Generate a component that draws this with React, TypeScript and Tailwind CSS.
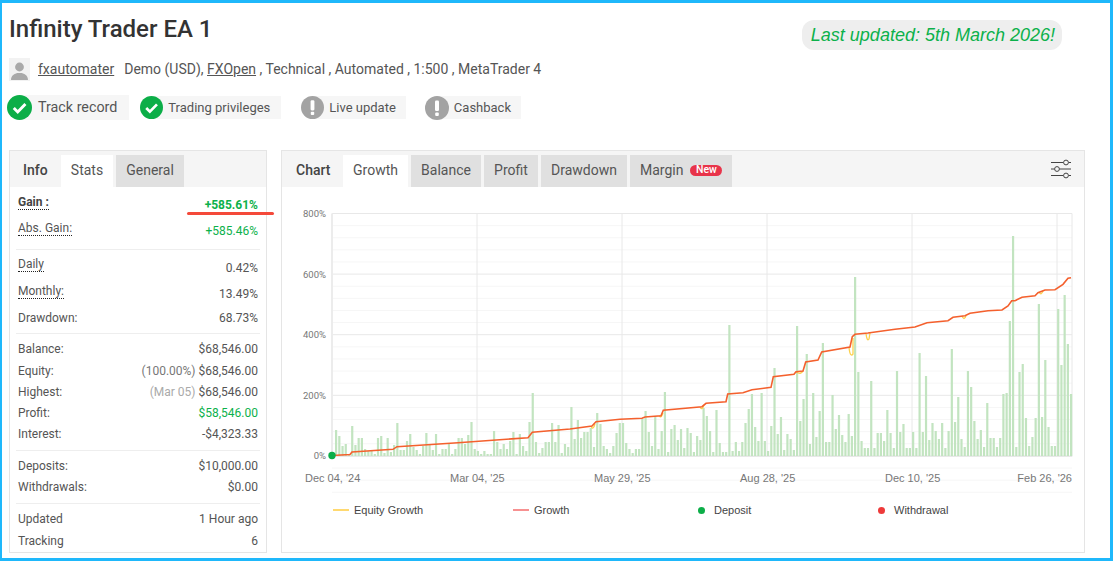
const bars = [
  26, 20, 10, 12, 2, 30, 11, 18, 18, 7, 5, 5, 2, 18, 20, 3, 18, 4, 11, 33, 6, 6, 15, 22, 9, 6, 2, 10, 23, 11, 6, 22, 2, 7, 7, 12, 2, 7, 18, 18, 12, 21, 34, 7, 5, 2, 5, 2, 2, 25, 14, 7, 12, 7, 15, 24, 2, 22, 10, 5, 34, 63, 14, 3, 8, 14, 14, 33, 14, 31, 3, 12, 9,
  49, 17, 36, 18, 24, 24, 28, 9, 43, 32, 10, 7, 3, 10, 23, 33, 33, 13, 7, 3, 7, 7, 37, 45, 24, 10, 39, 7, 25, 64, 4, 27, 31, 16, 27, 8, 28, 23, 4, 20, 16, 48, 40, 25, 4, 46, 13, 4, 4, 131, 5, 14, 5, 14, 33, 47, 62, 29, 15, 63, 15, 5, 30, 88, 22, 39, 6, 22, 17, 6, 130, 35, 57, 102, 12, 63, 19, 45,
  113, 14, 14, 61, 27, 41, 21, 14, 42, 20, 179, 84, 15, 8, 8, 75, 8, 23, 23, 15, 46, 23, 8, 85, 24, 32, 8, 8, 24, 8, 103, 24, 80, 16, 33, 25, 17, 33, 8, 25, 107, 34, 59, 17, 9, 85, 69, 35, 17, 26, 9, 53, 18, 18, 9, 18, 62, 63, 135, 220, 9, 84, 92, 38, 10, 19, 38, 152, 39, 96, 29, 10, 10, 147, 91, 161, 112, 62,
];

const growth =
  "M332 455.5 L350 454.5 L352 452 L393 449.3 L397 446.7 L458 442.7 L528 437.7 L532.3 432.3 L570 429 L592 426 L596 421.7 L620 419.3 L642 418.3 L645 417 L661 415.7 L663.3 410.3 L702 406.7 L706 403.3 L726 401.7 L727.7 394 L743 392.7 L752 389.7 L771 387.3 L773.3 376.7 L794 374.3 L796 371.7 L803 371 L805.7 362 L818 360 L821.7 352 L850 347 L852.3 336.7 L855 334.3 L868 333 L895 329.3 L915 327 L927 322.7 L948 320.7 L953 317.3 L965 315.7 L970 313.3 L988 310.7 L1002 310 L1008 306 L1011.7 300.7 L1015 300.7 L1022 297.3 L1035 295.7 L1038 292.7 L1045 290 L1055 289.7 L1063 284.3 L1068 278.3 L1071 277.7";

const dips = [
  "M591 426 Q593 431 595 424",
  "M659 415.7 Q661 419 663 413",
  "M700 407 Q702 411 704 405",
  "M796 372 Q801 375 803 371",
  "M849 347 Q850 358 853 354 L853 338",
  "M866 333.5 Q867 342 869 339 L870 333",
  "M962 316 Q964 321 966 316",
  "M1039 292 Q1041 296 1043 291",
];

const gridY = [0, 1, 2, 3, 4].flatMap((s) => [0, 1, 2, 3, 4].map((m) => 213.5 + s * 60.6 + m * 12.12));
const gridX = [477, 622, 767, 912, 1057, 1072];

const CheckIcon = ({ size }: { size: number }) => (
  <svg width={size} height={size} viewBox="0 0 24 24" className="relative shrink-0">
    <circle cx="12" cy="12" r="12" fill="#0cae48" />
    <path d="M6.5 12.5l3.8 3.8 7.4-7.6" fill="none" stroke="#fff" strokeWidth="2.8" />
  </svg>
);

const WarnIcon = ({ size }: { size: number }) => (
  <svg width={size} height={size} viewBox="0 0 24 24" className="relative shrink-0">
    <circle cx="12" cy="12" r="12" fill="#a3a3a3" />
    <rect x="10" y="4.5" width="4" height="10.5" rx="1.2" fill="#fff" />
    <rect x="10.2" y="16.5" width="3.6" height="3.4" rx="1" fill="#fff" />
  </svg>
);

const Badge = ({ ok, label, size, className }: { ok?: boolean; label: string; size: number; className: string }) => (
  <div className="flex items-center">
    {ok ? <CheckIcon size={size} /> : <WarnIcon size={size} />}
    <span className={`-ml-[12px] h-[23px] flex items-center bg-[#f6f6f6] text-[#555] ${className}`}>{label}</span>
  </div>
);

const Row = ({
  label,
  value,
  note,
  noteColor,
  dotted,
  bold,
  green,
  lift,
  h,
}: {
  label: string;
  value: string;
  note?: string;
  noteColor?: string;
  dotted?: boolean;
  bold?: boolean;
  green?: boolean;
  lift?: boolean;
  h: string;
}) => (
  <div className={`flex items-center justify-between ${h}`}>
    <span
      className={`leading-[14px] ${dotted ? "border-b border-dotted border-[#222]" : ""} ${lift ? "-mt-[6px]" : ""} ${
        bold ? "font-bold text-[#444]" : "text-[#555]"
      }`}
    >
      {label}
    </span>
    <span className={`${green ? "text-[#0cb14b]" : "text-[#555]"} ${bold ? "font-bold" : ""}`}>
      {note && <span className={`mr-[3px] ${noteColor}`}>{note}</span>}
      {value}
    </span>
  </div>
);

const Divider = () => <div className="h-px bg-[#eeeeee] -mx-[2px]" />;

const Tab = ({ label, active, className }: { label: string; active?: boolean; className: string }) => (
  <div className={`h-[32px] pb-[2px] flex items-center justify-center text-[14px] text-[#555] ${active ? "bg-white" : "bg-[#e0e0e0]"} ${className}`}>
    {label}
  </div>
);

const LegendItem = ({ color, dot, label }: { color: string; dot?: boolean; label: string }) => (
  <div className="flex items-center">
    {dot ? (
      <span className={`ml-[5px] mr-[9px] w-[7px] h-[7px] rounded-full ${color}`} />
    ) : (
      <span className={`mr-[5px] w-[16px] h-[2px] ${color}`} />
    )}
    <span>{label}</span>
  </div>
);

export default function App() {
  return (
    <div className="w-[1113px] h-[561px] overflow-hidden bg-white border-[#1fb8fb] border-t-[3px] border-b-[3px] border-l-[2px] border-r-[3px] pl-[7px] font-['Roboto',sans-serif]">
      <div className="flex justify-between h-[52px]">
        <h1 className="text-[24px] leading-[52px] font-medium text-[#333]">Infinity Trader EA 1</h1>
        <div className="self-start mt-[17px] mr-[48px] h-[30px] pl-[9px] pr-[7px] flex items-center rounded-xl bg-[#eeeeee] font-['Liberation_Sans',sans-serif] italic text-[18px] text-[#0cb14b]">
          Last updated: 5th March 2026!
        </div>
      </div>

      <div className="mt-[3px] h-[23px] flex items-center text-[14px] text-[#555]">
        <svg width="21" height="23" viewBox="0 0 21 23" className="mr-[8px]">
          <rect width="21" height="23" fill="#f2f2f2" />
          <circle cx="10.5" cy="9" r="4.4" fill="#a9a9a9" />
          <path d="M2 22c0-5 4-6 6-7h5c2 1 6 2 6 7z" fill="#a9a9a9" />
        </svg>
        <span className="underline">fxautomater</span>
        <span className="ml-[10px]">Demo (USD),&nbsp;</span>
        <span className="underline">FXOpen</span>
        <span>&nbsp;, Technical , Automated , 1:500 , MetaTrader 4</span>
      </div>

      <div className="mt-[14px] -ml-[2px] h-[25px] flex items-center">
        <Badge ok label="Track record" size={25} className="!h-[25px] pl-[18px] pr-[12px] text-[14.3px]" />
        <div className="ml-[11px]">
          <Badge ok label="Trading privileges" size={23} className="pl-[17px] pr-[11px] text-[13px]" />
        </div>
        <div className="ml-[20px]">
          <Badge label="Live update" size={23} className="pl-[17px] pr-[10px] text-[13px]" />
        </div>
        <div className="ml-[19px]">
          <Badge label="Cashback" size={24} className="pl-[17px] pr-[10px] text-[13px]" />
        </div>
      </div>

      <div className="mt-[30px] flex gap-[14px] h-[403px]">
        <div className="w-[258px] border border-[#e5e5e5] text-[12px] relative">
          <div className="h-[36px] pt-[4px] bg-[#f5f5f5] flex items-end pl-[13px]">
            <span className="h-[32px] pb-[2px] w-[38px] flex items-center text-[14px] font-medium text-[#444]">Info</span>
            <Tab label="Stats" active className="w-[52px]" />
            <Tab label="General" className="ml-[3px] w-[68px]" />
          </div>
          <div className="px-[8px] pt-[5px]">
            <Row label="Gain :" value="+585.61%" dotted bold green lift h="h-[26px]" />
            <Row label="Abs. Gain:" value="+585.46%" dotted green lift h="h-[26px]" />
            <div className="h-[5px]" />
            <Divider />
            <div className="h-[4px]" />
            <Row label="Daily" value="0.42%" dotted lift h="h-[27px]" />
            <Row label="Monthly:" value="13.49%" dotted lift h="h-[26px]" />
            <Row label="Drawdown:" value="68.73%" h="h-[21px]" />
            <div className="h-[5px]" />
            <Divider />
            <div className="h-[3.5px]" />
            <Row label="Balance:" value="$68,546.00" h="h-[22px]" />
            <Row label="Equity:" value="$68,546.00" note="(100.00%)" noteColor="text-[#777]" h="h-[22px]" />
            <Row label="Highest:" value="$68,546.00" note="(Mar 05)" noteColor="text-[#aaaaaa]" h="h-[20.5px]" />
            <Row label="Profit:" value="$58,546.00" green h="h-[21px]" />
            <Row label="Interest:" value="-$4,323.33" h="h-[21.25px]" />
            <div className="h-[5.75px]" />
            <Divider />
            <div className="h-[4px]" />
            <Row label="Deposits:" value="$10,000.00" h="h-[21.25px]" />
            <Row label="Withdrawals:" value="$0.00" h="h-[21.25px]" />
            <div className="h-[5px]" />
            <Divider />
            <div className="h-[4px]" />
            <Row label="Updated" value="1 Hour ago" h="h-[22px]" />
            <Row label="Tracking" value="6" h="h-[22px]" />
          </div>
          <div className="absolute left-[177px] top-[61px] w-[87px] h-[2.5px] rounded-full bg-[#f4493a]" />
        </div>

        <div className="w-[804px] border border-[#e5e5e5]">
          <div className="h-[36px] pt-[4px] bg-[#f5f5f5] flex items-end pl-[14px] pr-[12px]">
            <span className="h-[32px] pb-[2px] w-[47px] flex items-center text-[14px] font-medium text-[#444]">Chart</span>
            <Tab label="Growth" active className="w-[65px]" />
            <Tab label="Balance" className="ml-[3px] w-[70px]" />
            <Tab label="Profit" className="ml-[3px] w-[54px]" />
            <Tab label="Drawdown" className="ml-[3px] w-[86px]" />
            <div className="ml-[3px] w-[102px] h-[32px] pb-[2px] flex items-center pl-[10px] bg-[#e0e0e0] text-[14px] text-[#555]">
              Margin
              <span className="ml-[7px] h-[11px] w-[32px] flex items-center justify-center rounded-full bg-[#e8344a] text-white text-[10.5px] font-medium">
                New
              </span>
            </div>
            <svg width="22" height="20" viewBox="0 0 22 20" className="ml-auto self-center mt-[-5px]" fill="none" stroke="#444" strokeWidth="1">
              <path d="M1 3.5h12.4M18.6 3.5h2.4M1 10h3.4M9.6 10h11.4M1 16.5h12.4M18.6 16.5h2.4" />
              <circle cx="16" cy="3.5" r="2.4" />
              <circle cx="7" cy="10" r="2.4" />
              <circle cx="16" cy="16.5" r="2.4" />
            </svg>
          </div>

          <svg width="802" height="310" viewBox="282 187 802 310" className="block">
            {gridY.map((y, i) => (
              <line key={i} x1="332" x2="1072" y1={y} y2={y} stroke={i % 5 === 0 ? "#e8e8e8" : "#f6f6f6"} />
            ))}
            <line x1="332" x2="1072" y1="456.5" y2="456.5" stroke="#e8e8e8" />
            {gridX.map((x) => (
              <line key={x} x1={x} x2={x} y1="213.5" y2="456.5" stroke="#e8e8e8" />
            ))}
            <line x1="332" x2="332" y1="213.5" y2="456.5" stroke="#ececec" strokeWidth="2" />
            {bars.map((h, i) => (
              <rect key={i} x={335 + (i * 735) / (bars.length - 1)} y={456 - h} width="2.2" height={h} fill="#c2e4c0" />
            ))}
            {dips.map((d) => (
              <path key={d} d={d} fill="none" stroke="#fcd14d" strokeWidth="1.3" />
            ))}
            <path d={growth} fill="none" stroke="#f4602d" strokeWidth="1.6" />
            <circle cx="332" cy="455.5" r="3.7" fill="#0cae48" />
            <g fontSize="9.5" fill="#777" textAnchor="end">
              {["800%", "600%", "400%", "200%", "0%"].map((t, i) => (
                <text key={t} x="326" y={217 + i * 60.6}>
                  {t}
                </text>
              ))}
            </g>
            <g fontSize="11" fill="#777" fontFamily="'Liberation Sans', sans-serif">
              <text x="305" y="482">Dec 04, '24</text>
              <text x="450" y="482">Mar 04, '25</text>
              <text x="594" y="482">May 29, '25</text>
              <text x="740" y="482">Aug 28, '25</text>
              <text x="885" y="482">Dec 10, '25</text>
              <text x="1072" y="482" textAnchor="end">Feb 26, '26</text>
            </g>
          </svg>

          <div className="ml-[51px] mt-[1px] h-[24px] w-[720px] grid grid-cols-4 items-center font-['Liberation_Sans',sans-serif] text-[11px] text-[#444]">
            <LegendItem color="bg-[#ffd970]" label="Equity Growth" />
            <LegendItem color="bg-[#f79191]" label="Growth" />
            <LegendItem color="bg-[#0cae48]" dot label="Deposit" />
            <LegendItem color="bg-[#ee3a3a]" dot label="Withdrawal" />
          </div>
        </div>
      </div>
    </div>
  );
}
